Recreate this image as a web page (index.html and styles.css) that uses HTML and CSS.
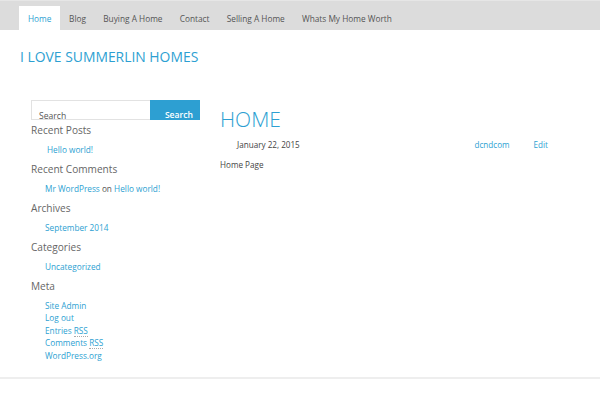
FILE: index.html
```html
<!DOCTYPE html>
<html>
<head>
<meta charset="utf-8">
<link rel="stylesheet" href="styles.css">
</head>
<body>
<nav class="nav">
  <a class="nav-item active" href="#">Home</a>
  <a class="nav-item" href="#">Blog</a>
  <a class="nav-item" href="#">Buying A Home</a>
  <a class="nav-item" href="#">Contact</a>
  <a class="nav-item" href="#">Selling A Home</a>
  <a class="nav-item" href="#">Whats My Home Worth</a>
</nav>
<header class="site-header">
  <h1 class="site-title">I LOVE SUMMERLIN HOMES</h1>
</header>
<div class="layout">
  <aside class="sidebar">
    <form class="search">
      <div class="search-input">Search</div>
      <div class="search-btn">Search</div>
    </form>
    <h3 class="widget-title first">Recent Posts</h3>
    <ul class="widget-list posts"><li><a href="#">Hello world!</a></li></ul>
    <h3 class="widget-title">Recent Comments</h3>
    <ul class="widget-list"><li><a href="#">Mr WordPress</a> on <a href="#">Hello world!</a></li></ul>
    <h3 class="widget-title">Archives</h3>
    <ul class="widget-list"><li><a href="#">September 2014</a></li></ul>
    <h3 class="widget-title">Categories</h3>
    <ul class="widget-list"><li><a href="#">Uncategorized</a></li></ul>
    <h3 class="widget-title">Meta</h3>
    <ul class="widget-list meta">
      <li><a href="#">Site Admin</a></li>
      <li><a href="#">Log out</a></li>
      <li><a href="#">Entries <abbr>RSS</abbr></a></li>
      <li><a href="#">Comments <abbr>RSS</abbr></a></li>
      <li><a href="#">WordPress.org</a></li>
    </ul>
  </aside>
  <main class="content">
    <h2 class="entry-title">HOME</h2>
    <div class="entry-meta">
      <span class="date">January 22, 2015</span>
      <a class="author" href="#">dcndcom</a>
      <a class="edit" href="#">Edit</a>
    </div>
    <p class="entry-body">Home Page</p>
  </main>
</div>
<footer class="footer"></footer>
</body>
</html>
```

FILE: styles.css
```css
html, body {
  margin: 0;
  padding: 0;
  background: #fff;
  font-family: "Open Sans", "DejaVu Sans", sans-serif;
  color: #555;
}
a { text-decoration: none; color: #2d9fd2; }

.nav {
  display: flex;
  height: 30px;
  background: #dcdcdc;
  border-top: 1px solid #e6e6e6;
  box-sizing: border-box;
  padding-left: 19px;
  align-items: flex-end;
}
.nav-item {
  height: 24px;
  line-height: 26px;
  padding: 0 8.6px;
  font-size: 8.3px;
  color: #555;
}
.nav-item.active {
  background: #fff;
  color: #2d9fd2;
  padding: 0 9px;
}

.site-header {
  padding: 17px 20px 0 20px;
}
.site-title {
  margin: 0;
  font-size: 13.9px;
  font-weight: 400;
  color: #2d9fd2;
  line-height: 20px;
}

.layout {
  display: flex;
  padding-top: 33px;
  height: 277px;
  border-bottom: 2px solid #eee;
}
.sidebar {
  width: 169px;
  margin-left: 31px;
}
.search {
  display: flex;
  height: 20px;
  margin: 0;
}
.search-input {
  width: 119px;
  border: 1px solid #e2e2e2;
  border-right: none;
  font-size: 8.6px;
  color: #555;
  padding: 10px 0 0 7px;
  box-sizing: border-box;
  line-height: 10px;
  height: 20px;
}
.search-btn {
  width: 50px;
  background: #2d9fd2;
  color: #fff;
  font-size: 8.6px;
  font-weight: 600;
  text-align: right;
  padding: 10px 7px 0 0;
  box-sizing: border-box;
  line-height: 10px;
}
.widget-title {
  margin: 0;
  font-size: 10.1px;
  font-weight: 400;
  color: #666;
  line-height: 20px;
}
.widget-list {
  list-style: none;
  margin: 0;
  padding: 0 0 0 14px;
  font-size: 8.25px;
  line-height: 19px;
}
.widget-list.posts { padding-left: 16px; }
.widget-list.meta { padding-top: 3.5px; }
.widget-list.meta li { line-height: 12.5px; }
abbr { text-decoration: none; border-bottom: 1px dotted #aaa; }

.content {
  flex: 1;
  margin-left: 20px;
  padding-right: 52px;
}
.entry-title {
  margin: 0;
  padding-top: 5px;
  font-size: 21px;
  font-weight: 300;
  color: #2d9fd2;
  line-height: 28px;
}
.entry-meta {
  display: flex;
  font-size: 8.15px;
  line-height: 12px;
  margin-top: 6px;
  padding-left: 17px;
}
.date { color: #444; flex: 1; }
.author { margin-right: 24px; }
.entry-body {
  margin: 8px 0 0 0;
  font-size: 8.15px;
  color: #444;
  line-height: 12px;
}
.footer {
  height: 16px;
}
```
